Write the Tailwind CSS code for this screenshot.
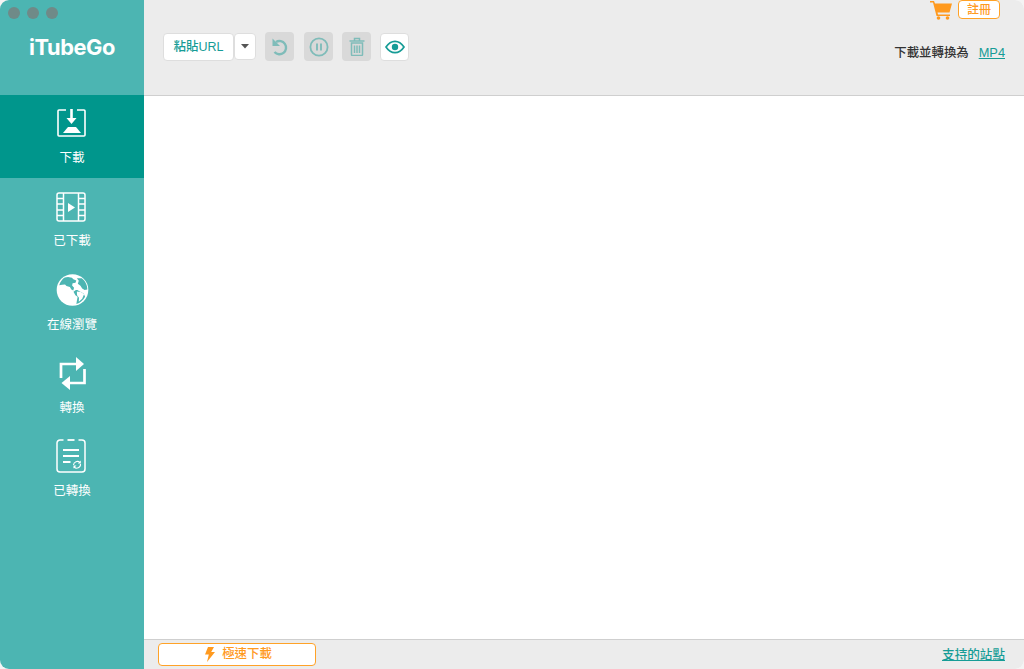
<!DOCTYPE html>
<html lang="zh-Hant">
<head>
<meta charset="utf-8">
<script src="https://cdn.jsdelivr.net/npm/@tailwindcss/browser@4"></script>
<title>iTubeGo</title>
</head>
<body class="bg-[#f4f4f4] overflow-hidden">
<div class="w-[1024px] h-[669px] flex rounded-[9px] overflow-hidden bg-white font-['Liberation_Sans','Noto_Sans_CJK_TC',sans-serif]">
  <aside class="w-[144px] shrink-0 bg-[#4cb5b2] flex flex-col text-white">
    <div class="h-[95px] shrink-0 flex flex-col items-center">
      <div class="self-start flex gap-[7px] pl-[8px] pt-[7px]">
        <span class="w-[12px] h-[12px] rounded-full bg-[#6f8a88]"></span>
        <span class="w-[12px] h-[12px] rounded-full bg-[#6f8a88]"></span>
        <span class="w-[12px] h-[12px] rounded-full bg-[#6f8a88]"></span>
      </div>
      <div class="mt-[15px] text-[21.8px] leading-[26px] font-bold font-['Inter',sans-serif] tracking-[-0.4px]">iTubeGo</div>
    </div>
    <nav class="flex flex-col">
      <a class="h-[83px] bg-[#00968c] flex flex-col items-center pt-[14px]">
        <svg class="mr-[1px]" width="29" height="28" viewBox="0 0 29 28" fill="none" stroke="white" stroke-width="1.6">
          <path d="M9 1H2a1 1 0 0 0-1 1v24a1 1 0 0 0 1 1h25a1 1 0 0 0 1-1V2a1 1 0 0 0-1-1h-7"/>
          <path d="M14.500 0v10" stroke-width="2.600"/>
          <path d="M9.500 9h10l-5 6z" fill="white" stroke="none"/>
          <path d="M11 18h8l5 6H6z" fill="white" stroke="none"/>
        </svg>
        <span class="mt-[13px] text-[12.500px] leading-[16px]">下載</span>
      </a>
      <a class="h-[83px] flex flex-col items-center pt-[14px]">
        <svg class="mr-[2px]" width="30" height="30" viewBox="0 0 30 30" fill="none" stroke="white" stroke-width="1.500">
          <rect x="1" y="1" width="28" height="28" rx="2"/>
          <path d="M7.500 1v28M22.500 1v28"/>
          <path d="M1 6.500h6.500M1 12h6.500M1 18h6.500M1 23.500h6.500M22.500 6.500H29M22.500 12H29M22.500 18H29M22.500 23.500H29"/>
          <path d="M12 11l7 4.500-7 4.500z" fill="white" stroke="none"/>
        </svg>
        <span class="mt-[11px] text-[12.500px] leading-[16px]">已下載</span>
      </a>
      <a class="h-[83px] flex flex-col items-center pt-[13px]">
        <svg width="33" height="32" viewBox="0 0 33 33">
          <circle cx="16.500" cy="16.500" r="16.300" fill="white"/>
          <path fill="#4cb5b2" d="M8.500 3.500C6 5 3.800 8 2.800 11.500l3-.5 3-.2 1.500 1.700 3.500.8 1.500 2.800 2 1 .8-2.800-2-2.500.5-2.300 3-.5.8-2.200-3-1.300-1.500-1.700-4-.8zM21 4.500l2 2.500-1 3 2.700 2 1.800 3 2.500 1.500 2.800-.5c0-5-2.500-9-5.800-11.500zM20 16.500l-2.500 1.800 2 3.500 2.300 1.700-.8 4-.5 3.500c3.800-1.200 7-3.700 9-7.500l-1.500-3.500-4-2-2.500-1.500z"/>
          <path fill="white" d="M21 18l4 .5 3.500 2-2 5-3.500 3 .2-4-2-2.500z"/>
        </svg>
        <span class="mt-[11px] text-[12.500px] leading-[16px]">在線瀏覽</span>
      </a>
      <a class="h-[83px] flex flex-col items-center pt-[12px]">
        <svg width="28" height="34" viewBox="0 0 28 34" fill="none" stroke="white" stroke-width="2.700">
          <path d="M3 22V8h16"/>
          <path d="M18 1l8 7-8 7z" fill="white" stroke="none"/>
          <path d="M26.500 13v14H11"/>
          <path d="M12 20l-8.500 7 8.500 7z" fill="white" stroke="none"/>
        </svg>
        <span class="mt-[10px] text-[12.500px] leading-[16px]">轉換</span>
      </a>
      <a class="h-[83px] flex flex-col items-center pt-[12px]">
        <svg class="mr-[2px]" width="30" height="34" viewBox="0 0 30 34" fill="none" stroke="white" stroke-width="1.500">
          <path d="M7.500 1H4a3 3 0 0 0-3 3v26a3 3 0 0 0 3 3h22a3 3 0 0 0 3-3V4a3 3 0 0 0-3-3h-3.500"/>
          <path d="M11.500 1h7" stroke-width="1.800"/>
          <path d="M7 11h16M7 17h16M7 23h7.500" stroke-width="1.800"/>
          <path d="M17.500 26a3.800 3.800 0 0 1 6.500-2.400M24.500 25a3.800 3.800 0 0 1-6.500 3" stroke-width="1.100"/>
          <path d="M24.800 21.500v3h-3zM17.500 29.500v-3h3z" fill="white" stroke="none"/>
        </svg>
        <span class="mt-[10px] text-[12.500px] leading-[16px]">已轉換</span>
      </a>
    </nav>
  </aside>
  <main class="flex-1 min-w-0 flex flex-col">
    <header class="h-[96px] shrink-0 bg-[#ececec] border-b border-[#cfcfcf] flex justify-between pl-[19px] pr-[19px]">
      <div class="flex items-start gap-[9px] pt-[32px]">
        <div class="flex items-start mt-[1px]">
          <button class="w-[71px] h-[28px] bg-white border border-[#dedede] rounded-[4px] text-[#169c96] text-[12.500px] font-medium leading-none">粘貼URL</button>
          <button class="w-[22px] h-[27px] bg-white border border-[#dedede] rounded-[4px] flex items-center justify-center">
            <svg width="8" height="5" viewBox="0 0 8 5"><path d="M0 0h8L4 4.500z" fill="#555"/></svg>
          </button>
        </div>
        <button class="w-[29px] h-[29px] bg-[#d9d9d9] rounded-[4px] flex items-center justify-center">
          <svg width="18" height="18" viewBox="0 0 18 18" fill="none" stroke="#7fbcb9" stroke-width="2.400">
            <path d="M5 4A6.600 6.600 0 1 1 3.500 14"/>
            <path d="M1.500 0.500v7.500h7.500z" fill="#7fbcb9" stroke="none"/>
          </svg>
        </button>
        <button class="ml-[1px] w-[29px] h-[29px] bg-[#d9d9d9] rounded-[4px] flex items-center justify-center">
          <svg width="20" height="20" viewBox="0 0 20 20" fill="none" stroke="#7fbcb9" stroke-width="1.800">
            <circle cx="10" cy="10" r="8.600"/>
            <path d="M8 6.500v7M12 6.500v7" stroke-width="1.900"/>
          </svg>
        </button>
        <button class="w-[29px] h-[29px] bg-[#d9d9d9] rounded-[4px] flex items-center justify-center">
          <svg width="16" height="19" viewBox="0 0 16 19" fill="none" stroke="#7fbcb9" stroke-width="1.500">
            <path d="M0.500 4h15M5.500 3.500v-2h5v2"/>
            <path d="M2.500 6h11v11.500a1 1 0 0 1-1 1h-9a1 1 0 0 1-1-1z"/>
            <path d="M5.500 8.500v7.500M8 8.500v7.500M10.500 8.500v7.500"/>
          </svg>
        </button>
        <button class="mt-[1px] w-[29px] h-[28px] bg-white border border-[#dedede] rounded-[4px] flex items-center justify-center">
          <svg width="20" height="14" viewBox="0 0 20 14" fill="none" stroke="#169c96" stroke-width="1.700">
            <path d="M1 7c2.500-3.800 5.500-5.700 9-5.700S16.500 3.200 19 7c-2.500 3.800-5.500 5.700-9 5.700S3.500 10.800 1 7z"/>
            <circle cx="10" cy="7" r="3.200" fill="#169c96" stroke="none"/>
          </svg>
        </button>
      </div>
      <div class="flex flex-col items-end">
        <div class="flex items-start gap-[6px] pr-[5px]">
          <svg class="mt-[1px]" width="22" height="19" viewBox="0 0 22 19">
            <path fill="#ff9a1f" d="M0 0h4l1 2.500h17l-2.500 9H7.500l.5 2h12v1.500H6.500L3 1.500H0z"/>
            <circle cx="8.500" cy="17" r="1.800" fill="#ff9a1f"/><circle cx="17.500" cy="17" r="1.800" fill="#ff9a1f"/>
          </svg>
          <button class="w-[42px] h-[19px] bg-white border border-[#ffa227] rounded-[4px] text-[#ff9a1f] text-[12px] font-medium leading-none">註冊</button>
        </div>
        <div class="mt-[25px] flex items-center gap-[10px] text-[12.400px] leading-[16px] font-medium">
          <span class="text-[#333]">下載並轉換為</span>
          <a class="text-[#169c96] underline text-[12.800px]">MP4</a>
        </div>
      </div>
    </header>
    <section class="flex-1 bg-white"></section>
    <footer class="h-[30px] shrink-0 bg-[#ececec] border-t border-[#cfcfcf] flex items-center justify-between pl-[14px] pr-[19px]">
      <button class="w-[158px] h-[23px] bg-white border border-[#ffa227] rounded-[4px] flex items-center justify-center gap-[7px] text-[#ff9a1f] text-[12.400px] font-medium leading-none pl-[2px]">
        <svg width="11" height="15" viewBox="0 0 11 15"><path fill="#ff9a1f" d="M4 0h6L7.200 5H11L3 15l1.800-7.500H1z"/></svg>
        <span>極速下載</span>
      </button>
      <a class="text-[#169c96] text-[12.600px] leading-[16px] font-medium underline">支持的站點</a>
    </footer>
  </main>
</div>
</body>
</html>
